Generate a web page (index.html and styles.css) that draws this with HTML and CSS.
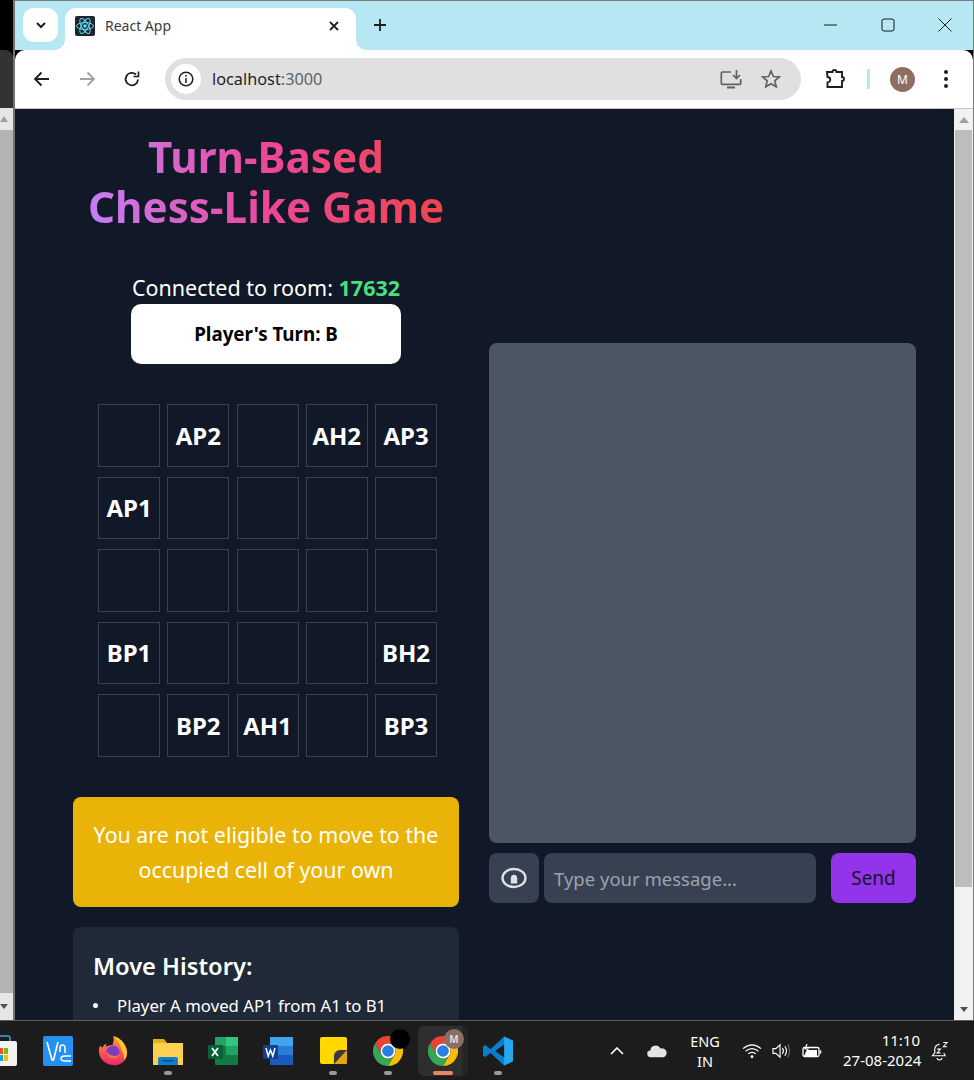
FILE: index.html
```html
<!DOCTYPE html>
<html>

<head>
    <title>React App</title>
    <meta charset="utf-8" />
    <link rel="stylesheet" href="styles.css">
</head>

<body>
    <svg class="defs-holder" width="0" height="0">
        <defs>
            <g id="chrome-logo">
                <path d="M2 7.500A15 15 0 0 1 28 7.500H15A7.500 7.500 0 0 0 8.500 18.750z" fill="#ea4335"/>
                <path d="M28 7.500A15 15 0 0 1 15 30L21.500 18.750A7.500 7.500 0 0 0 15 7.500z" fill="#fbbc04"/>
                <path d="M15 30A15 15 0 0 1 2 7.500L8.500 18.750A7.500 7.500 0 0 0 21.500 18.750z" fill="#34a853"/>
                <circle cx="15" cy="15" r="7.500" fill="#fff"/>
                <circle cx="15" cy="15" r="5.800" fill="#2a7de1"/>
            </g>
            <linearGradient id="fox-body" x1="0" y1="0" x2="0" y2="1">
                <stop offset="0" stop-color="#ff9a2e"/>
                <stop offset="1" stop-color="#f0266e"/>
            </linearGradient>
        </defs>
    </svg>

    <div id="screen">
        <div id="desktop-strip">
            <div class="strip-black"></div>
            <div class="strip-dark"></div>
            <div class="strip-scroll">
                <div class="strip-arrow"><svg width="8" height="6" viewBox="0 0 8 6"><path d="M4 0l4 6H0z" fill="#a0a0a0"/></svg></div>
                <div class="strip-thumb"></div>
                <div class="strip-arrow"><svg width="8" height="5" viewBox="0 0 8 5"><path d="M0 0h8L4 5z" fill="#505050"/></svg></div>
            </div>
        </div>

        <div id="window">
            <div id="tabbar">
                <div class="tab-search">
                    <svg width="16" height="16" viewBox="0 0 16 16"><path d="M4 6l4 4 4-4" fill="none" stroke="#1f1f1f" stroke-width="2"/></svg>
                </div>
                <div class="tab">
                    <div class="favicon">
                        <svg width="20" height="20" viewBox="0 0 20 20" fill="none" stroke="#61dafb" stroke-width="1">
                            <circle cx="10" cy="10" r="1.800" fill="#61dafb" stroke="none"/>
                            <ellipse cx="10" cy="10" rx="8.500" ry="3.400"/>
                            <ellipse cx="10" cy="10" rx="8.500" ry="3.400" transform="rotate(60 10 10)"/>
                            <ellipse cx="10" cy="10" rx="8.500" ry="3.400" transform="rotate(120 10 10)"/>
                        </svg>
                    </div>
                    <span class="tab-title">React App</span>
                    <svg class="tab-close" width="12" height="12" viewBox="0 0 12 12"><path d="M2 2l8 8M10 2l-8 8" stroke="#1f1f1f" stroke-width="1.800"/></svg>
                </div>
                <svg class="new-tab" width="14" height="14" viewBox="0 0 14 14"><path d="M7 1v12M1 7h12" stroke="#1f1f1f" stroke-width="1.800"/></svg>
                <div class="win-controls">
                    <svg width="14" height="14" viewBox="0 0 14 14"><path d="M0 7h13" stroke="#1a1a1a" stroke-width="1"/></svg>
                    <svg width="14" height="14" viewBox="0 0 14 14"><rect x="1" y="1" width="12" height="12" rx="2" fill="none" stroke="#1a1a1a" stroke-width="1"/></svg>
                    <svg width="14" height="14" viewBox="0 0 14 14"><path d="M0.500 0.500l13 13M13.500 0.500l-13 13" stroke="#1a1a1a" stroke-width="1"/></svg>
                </div>
            </div>

            <div id="toolbar">
                <div class="nav-icons">
                    <svg width="18" height="18" viewBox="0 0 18 18" fill="none" stroke="#1f1f1f" stroke-width="1.800"><path d="M16 9H2M8.500 2.500L2 9l6.500 6.500"/></svg>
                    <svg width="18" height="18" viewBox="0 0 18 18" fill="none" stroke="#a3a3a3" stroke-width="1.800"><path d="M2 9h14M9.500 2.500L16 9l-6.500 6.500"/></svg>
                    <svg width="18" height="18" viewBox="0 0 18 18" fill="none" stroke="#1f1f1f" stroke-width="1.800"><path d="M15 9.500A6.200 6.200 0 1 1 13 4.500"/><path d="M15.500 1.500v5h-5" stroke-width="1.600"/></svg>
                </div>
                <div class="omnibox">
                    <div class="site-info">
                        <svg width="16" height="16" viewBox="0 0 16 16" fill="none" stroke="#1f1f1f" stroke-width="1.500"><circle cx="8" cy="8" r="6.800"/><path d="M8 7v5M8 4v1.700"/></svg>
                    </div>
                    <span class="url">localhost<span class="url-port">:3000</span></span>
                    <svg class="omni-install" width="22" height="20" viewBox="0 0 22 20" fill="none" stroke="#5f6368" stroke-width="1.700"><path d="M11 3H2.500A1.200 1.200 0 0 0 1.300 4.200v10a1.200 1.200 0 0 0 1.200 1.200h17a1.200 1.200 0 0 0 1.200-1.200V10"/><path d="M7 18.500h8" stroke-width="2"/><path d="M16.500 1v8M13 6l3.500 3.500L20 6"/></svg>
                    <svg class="omni-star" width="20" height="20" viewBox="0 0 20 20" fill="none" stroke="#5f6368" stroke-width="1.700"><path d="M10 2l2.400 5.500 6 .5-4.600 3.900 1.400 5.800L10 14.700l-5.200 3 1.400-5.800L1.600 8l6-.5z"/></svg>
                </div>
                <svg class="ext-icon" width="22" height="22" viewBox="0 0 22 22" fill="none" stroke="#1f1f1f" stroke-width="1.900"><path d="M3 4h5.500a2 2 0 1 1 4 0H18v5a2 2 0 1 1 0 4v6H3.500v-4.500a2.500 2.500 0 0 0 0-5.500z"/></svg>
                <div class="toolbar-sep"></div>
                <div class="avatar">M</div>
                <div class="kebab"><i></i><i></i><i></i></div>
            </div>

            <div id="page-area">
                <div id="page">
                    <div class="col-left">
                        <h1 class="title">Turn-Based<br>Chess-Like Game</h1>
                        <div class="room-box">
                            <p class="room">Connected to room: <span class="room-id">17632</span></p>
                            <div class="turn">Player's Turn: B</div>
                        </div>
                        <div class="board">
                            <div class="cell"></div>
                            <div class="cell">AP2</div>
                            <div class="cell"></div>
                            <div class="cell">AH2</div>
                            <div class="cell">AP3</div>
                            <div class="cell">AP1</div>
                            <div class="cell"></div>
                            <div class="cell"></div>
                            <div class="cell"></div>
                            <div class="cell"></div>
                            <div class="cell"></div>
                            <div class="cell"></div>
                            <div class="cell"></div>
                            <div class="cell"></div>
                            <div class="cell"></div>
                            <div class="cell">BP1</div>
                            <div class="cell"></div>
                            <div class="cell"></div>
                            <div class="cell"></div>
                            <div class="cell">BH2</div>
                            <div class="cell"></div>
                            <div class="cell">BP2</div>
                            <div class="cell">AH1</div>
                            <div class="cell"></div>
                            <div class="cell">BP3</div>
                        </div>
                        <div class="alert">You are not eligible to move to the occupied cell of your own</div>
                        <div class="history">
                            <h2>Move History:</h2>
                            <ul>
                                <li>Player A moved AP1 from A1 to B1</li>
                            </ul>
                        </div>
                    </div>
                    <div class="col-right">
                        <div class="chat-log"></div>
                        <div class="chat-form">
                            <div class="emoji-btn">
                                <svg width="26" height="22" viewBox="0 0 26 22"><ellipse cx="13" cy="11" rx="11.500" ry="9" fill="none" stroke="#dfe1e5" stroke-width="2.400"/><path d="M9.800 16.500v-5a3.200 3.800 0 0 1 6.400 0v5z" fill="#dfe1e5"/></svg>
                            </div>
                            <div class="chat-input">Type your message...</div>
                            <div class="send-btn">Send</div>
                        </div>
                    </div>
                </div>
                <div class="scrollbar">
                    <div class="scroll-arrow"><svg width="10" height="6" viewBox="0 0 10 6"><path d="M5 0l5 6H0z" fill="#a0a0a0"/></svg></div>
                    <div class="scroll-track"><div class="scroll-thumb"></div></div>
                    <div class="scroll-arrow"><svg width="8" height="5" viewBox="0 0 8 5"><path d="M0 0h8L4 5z" fill="#505050"/></svg></div>
                </div>
            </div>
        </div>

        <div id="taskbar">
            <div class="tb-apps">
                <div class="store-slot">
                    <svg width="20" height="34" viewBox="0 0 20 34"><path d="M-8 7h23a2 2 0 0 1 2 2v21a2 2 0 0 1-2 2H-8z" fill="#f3f3f3"/><path d="M0 2h8a2 2 0 0 1 2 2v3" fill="none" stroke="#35a8e0" stroke-width="1.500"/><rect x="0" y="14" width="3" height="6" fill="#f25022"/><rect x="4" y="14" width="4" height="6" fill="#7fba00"/><rect x="0" y="21" width="3" height="6" fill="#00a4ef"/><rect x="4" y="21" width="4" height="6" fill="#ffb900"/></svg>
                </div>
                <div class="app">
                    <svg width="30" height="30" viewBox="0 0 30 30"><rect width="30" height="30" rx="2" fill="#2490f0"/><path d="M4 6l5 18h1.500L15 6" fill="none" stroke="#fff" stroke-width="1.600"/><path d="M17 16v-4q0-3 2.500-3t2.500 3v5M28 20h-6q-4 0-4 2.500t4 2.500h6" fill="none" stroke="#fff" stroke-width="1.500"/></svg>
                </div>
                <div class="app">
                    <svg width="30" height="30" viewBox="0 0 30 30"><path d="M15 29A14 14 0 0 1 2 9.500q1 1.500 2.500 2 1-3 4-4-1 2 0 3 3-2 6-1.500 2-5 .5-9 11 3 14 14 1 7-3.500 11.500T15 29z" fill="url(#fox-body)"/><path d="M16 0q9 3 12.500 13 1.500 7-2 11-1-11-10.500-24z" fill="#ffc52e"/><circle cx="15" cy="16" r="6.500" fill="#7a3fc0"/><path d="M9 16q0 7 7 6.500 5-.5 5.500-5-2 3-6 2.500T9 16z" fill="#ff7139"/></svg>
                </div>
                <div class="app has-dot">
                    <svg width="30" height="28" viewBox="0 0 30 28"><path d="M0 2h11l3 4h16v22H0z" fill="#e8ae14"/><rect y="6" width="30" height="22" fill="#ffd04f"/><path d="M5 28v-6a2 2 0 0 1 2-2h16a2 2 0 0 1 2 2v6z" fill="#0f7fd0"/><rect x="9" y="23" width="12" height="1.500" fill="#0b4f88"/></svg>
                </div>
                <div class="app">
                    <svg width="30" height="28" viewBox="0 0 30 28"><rect x="7" y="0" width="23" height="28" rx="1" fill="#107c41"/><rect x="18" y="0" width="12" height="9" fill="#33c481"/><rect x="7" y="0" width="11" height="9" fill="#21a366"/><rect x="18" y="9" width="12" height="9" fill="#21a366"/><rect x="0" y="8" width="15" height="14" rx="1" fill="#0b5f35"/><path d="M4 11l6 8M10 11l-6 8" stroke="#fff" stroke-width="1.800"/></svg>
                </div>
                <div class="app">
                    <svg width="30" height="28" viewBox="0 0 30 28"><rect x="7" y="0" width="23" height="28" rx="1" fill="#185abd"/><rect x="7" y="0" width="23" height="9" fill="#41a5ee"/><rect x="7" y="9" width="23" height="9" fill="#2b7cd3"/><rect x="0" y="8" width="15" height="14" rx="1" fill="#103f91"/><path d="M3 11l2.200 8 2.300-6 2.300 6 2.200-8" fill="none" stroke="#fff" stroke-width="1.500"/></svg>
                </div>
                <div class="app has-dot">
                    <svg width="27" height="27" viewBox="0 0 27 27"><rect width="27" height="27" rx="2" fill="#ffd800"/><path d="M27 13v12a2 2 0 0 1-2 2H13z" fill="#e2a410"/><path d="M14 27v-8a6 6 0 0 1 6-6h7z" fill="#3a3a3a"/></svg>
                </div>
                <div class="app has-dot">
                    <svg width="30" height="30" viewBox="0 0 30 30"><use href="#chrome-logo"/></svg>
                    <div class="badge-black"></div>
                </div>
                <div class="app active">
                    <svg width="30" height="30" viewBox="0 0 30 30"><use href="#chrome-logo"/></svg>
                    <div class="badge-m">M</div>
                </div>
                <div class="app has-dot">
                    <svg width="30" height="30" viewBox="0 0 32 31"><path d="M22.500 0L32 4.500v22L22.500 31 8 17.500 2.500 22 0 20.500v-10L2.500 9 8 13.500z" fill="#0a7fd0"/><path d="M22.500 0L32 4.500v22L22.500 31z" fill="#25a8f0"/><path d="M22.500 8.500L13 15.500l9.500 7z" fill="#1c1c1c"/></svg>
                </div>
            </div>
            <div class="tb-tray">
                <svg width="14" height="8" viewBox="0 0 14 8" fill="none" stroke="#fff" stroke-width="1.600"><path d="M1 7l6-6 6 6"/></svg>
                <svg class="tray-cloud" width="20" height="14" viewBox="0 0 21 14"><path d="M4 13.500a3.500 3.500 0 0 1-.5-7A5.500 5.500 0 0 1 14 4.500a4.500 4.500 0 0 1 3.500 9z" fill="#e4e4e4"/></svg>
                <div class="lang">ENG<br>IN</div>
                <svg class="tray-wifi" width="20" height="16" viewBox="0 0 21 16" fill="none" stroke="#fff" stroke-width="1.300"><path d="M1 5.500q9.500-8 19 0M3.800 8.300q6.700-5.500 13.400 0M6.500 11q4-3 8 0"/><circle cx="10.500" cy="14" r="1.500" fill="#fff" stroke="none"/></svg>
                <svg class="tray-vol" width="19" height="16" viewBox="0 0 20 16" fill="none" stroke="#fff" stroke-width="1.200"><path d="M1 5.500h3L8.500 1.500v13L4 10.500H1z"/><path d="M11 5q2 3 0 6M13.500 3q3.500 5 0 10"/><path d="M16.500 1q4 7 0 14" stroke="#666"/></svg>
                <svg class="tray-batt" width="20" height="14" viewBox="0 0 20 14" fill="none" stroke="#fff" stroke-width="1.300"><rect x="1" y="3.500" width="16" height="9" rx="1.500"/><path d="M18.500 6.500v3" stroke-width="1.500"/><path d="M2 12l3-6h10v6z" fill="#fff" stroke="none"/><path d="M5 0L3 5h3L4 9" stroke-width="1.200"/></svg>
                <div class="clock">
                    <div>11:10</div>
                    <div>27-08-2024</div>
                </div>
                <svg class="tray-bell" width="17" height="20" viewBox="0 0 18 20" fill="none" stroke="#fff" stroke-width="1.200"><path d="M9 3a5 5 0 0 0-5 5v4l-2.500 3h13.500l-1.500-3"/><path d="M6.500 17.500a2.500 2 0 0 0 5 0"/><path d="M6.500 8h3.500l-3.500 4h3.500M13 1h4l-4 4.500h4" stroke-width="1.100"/></svg>
            </div>
        </div>
    </div>
</body>

</html>
```

FILE: styles.css
```css
* {
    margin: 0;
    padding: 0;
    box-sizing: border-box;
}

html,
body {
    width: 974px;
    height: 1080px;
    overflow: hidden;
    font-family: "Noto Sans", "Open Sans", sans-serif;
}

.defs-holder {
    position: absolute;
}

#screen {
    display: grid;
    grid-template-columns: 15px 959px;
    grid-template-rows: 1020px 60px;
    width: 974px;
    height: 1080px;
    background: #000;
}

/* sliver of the window behind */
#desktop-strip {
    display: flex;
    flex-direction: column;
    border-right: 2px solid #747474;
}

.strip-black {
    height: 50px;
    background: #000;
}

.strip-dark {
    height: 58px;
    background: #333;
    border-top-right-radius: 8px;
}

.strip-scroll {
    flex: 1;
    display: flex;
    flex-direction: column;
    background: #e6e6e6;
}

.strip-arrow {
    display: flex;
    align-items: center;
    height: 22px;
}

.strip-thumb {
    height: 863px;
    background: #b4b4b4;
}

.strip-thumb + .strip-arrow {
    height: 27px;
}

#window {
    display: flex;
    flex-direction: column;
    min-width: 0;
    border-top: 1px solid #7b7b7b;
    border-right: 1px solid #7b7b7b;
}

#tabbar {
    display: flex;
    align-items: flex-start;
    height: 49px;
    flex: none;
    background: #b5e8f3;
    padding: 7px 0 0 8px;
}

.tab-search {
    display: flex;
    align-items: center;
    justify-content: center;
    width: 35px;
    height: 34px;
    background: #fff;
    border-radius: 11px;
}

.tab {
    position: relative;
    display: flex;
    align-items: center;
    width: 291px;
    height: 42px;
    margin-left: 7px;
    padding: 0 16px 7px 10px;
    background: #fff;
    border-radius: 11px 11px 0 0;
}

.tab::before,
.tab::after {
    content: "";
    position: absolute;
    bottom: 0;
    width: 11px;
    height: 11px;
}

.tab::before {
    left: -11px;
    background: radial-gradient(circle at 0 0, transparent 11px, #fff 11px);
}

.tab::after {
    right: -11px;
    background: radial-gradient(circle at 100% 0, transparent 11px, #fff 11px);
}

.favicon {
    display: flex;
    align-items: center;
    justify-content: center;
    width: 20px;
    height: 20px;
    background: #20232a;
    border-radius: 2px;
}

.tab-title {
    margin-left: 10px;
    font-size: 14px;
    color: #3c3c3c;
    flex: 1;
}

.new-tab {
    margin: 10px 0 0 17px;
}

.win-controls {
    display: flex;
    gap: 43px;
    margin: 10px 0 0 auto;
    padding-right: 21px;
}

#toolbar {
    display: flex;
    align-items: center;
    height: 59px;
    flex: none;
    background: #fff;
    border-radius: 10px 10px 0 0;
    border-bottom: 1px solid #c6c6c6;
}

.nav-icons {
    display: flex;
    gap: 27px;
    padding-left: 18px;
    width: 150px;
}

.omnibox {
    display: flex;
    align-items: center;
    width: 636px;
    height: 42px;
    background: #e0e0e0;
    border-radius: 21px;
    padding-left: 6px;
}

.site-info {
    display: flex;
    align-items: center;
    justify-content: center;
    width: 30px;
    height: 30px;
    background: #fff;
    border-radius: 50%;
}

.url {
    margin-left: 11px;
    font-size: 16.300px;
    color: #1f1f1f;
    flex: 1;
}

.url-port {
    color: #5f6368;
}

.omni-install {
    margin-right: 19px;
}

.omni-star {
    margin-right: 20px;
}

.ext-icon {
    margin-left: 23px;
}

.toolbar-sep {
    width: 3px;
    height: 20px;
    background: #b5e8f3;
    margin-left: 21px;
}

.avatar {
    display: flex;
    align-items: center;
    justify-content: center;
    width: 25px;
    height: 25px;
    margin-left: 20px;
    border-radius: 50%;
    background: #8d6e63;
    color: #fff;
    font-size: 12px;
}

.kebab {
    display: flex;
    flex-direction: column;
    gap: 3px;
    margin-left: 29px;
}

.kebab i {
    display: block;
    width: 4px;
    height: 4px;
    border-radius: 50%;
    background: #1f1f1f;
}

#page-area {
    display: flex;
    flex: 1;
    min-height: 0;
}

#page {
    display: flex;
    align-items: flex-start;
    width: 939px;
    flex: none;
    height: 911px;
    overflow: hidden;
    background: #111827;
    color: #fff;
    padding: 20px 38px 0 58px;
    gap: 30px;
}

.col-left {
    width: 386px;
    flex: none;
}

.title {
    text-align: center;
    white-space: nowrap;
    font-size: 42.200px;
    line-height: 50px;
    font-weight: 700;
    background: linear-gradient(to right, #c084fc, #ec4899, #ef4444);
    background-clip: text;
    -webkit-background-clip: text;
    color: transparent;
    padding: 3px 15px 0;
}

.room-box {
    width: 270px;
    margin: 39px auto 0;
}

.room {
    text-align: center;
    font-size: 21.500px;
    line-height: 33px;
    white-space: nowrap;
}

.room-id {
    color: #4ade80;
    font-weight: 700;
}

.turn {
    display: flex;
    align-items: center;
    justify-content: center;
    height: 60px;
    background: #fff;
    color: #000;
    border-radius: 10px;
    font-size: 18.800px;
    font-weight: 700;
}

.board {
    display: grid;
    grid-template-columns: repeat(5, 62px);
    grid-auto-rows: 62.500px;
    gap: 10px 7.250px;
    justify-content: start;
    padding-left: 25px;
    margin-top: 40px;
}

.cell {
    display: flex;
    align-items: center;
    justify-content: center;
    border: 1px solid #374151;
    font-size: 24px;
    font-weight: 700;
}

.alert {
    margin-top: 40px;
    height: 110px;
    padding: 20px;
    background: #eab308;
    border-radius: 8px;
    text-align: center;
    font-size: 21.400px;
    line-height: 35px;
}

.history {
    margin-top: 20px;
    padding: 20px;
    background: #1f2937;
    border-radius: 8px;
    height: 200px;
}

.history h2 {
    font-size: 23.700px;
    line-height: 38px;
    font-weight: 600;
    margin-bottom: 9px;
}

.history ul {
    list-style: none;
    font-size: 16.750px;
    line-height: 24px;
}

.history li {
    display: flex;
    align-items: center;
}

.history li::before {
    content: "";
    width: 5px;
    height: 5px;
    margin-right: 19px;
    border-radius: 50%;
    background: #fff;
}

.col-right {
    flex: 1;
    padding-top: 214px;
    min-width: 0;
}

.chat-log {
    height: 500px;
    background: #4b5563;
    border-radius: 8px;
}

.chat-form {
    display: flex;
    gap: 5px;
    margin-top: 10px;
    height: 50px;
}

.emoji-btn {
    display: flex;
    align-items: center;
    justify-content: center;
    width: 50px;
    background: #374151;
    border-radius: 8px;
}

.chat-input {
    flex: 1;
    display: flex;
    align-items: center;
    padding-left: 10px;
    background: #374151;
    border-radius: 8px;
    font-size: 18.500px;
    color: #9ca3af;
}

.send-btn {
    display: flex;
    align-items: center;
    justify-content: center;
    width: 85px;
    margin-left: 10px;
    background: #9333ea;
    border-radius: 8px;
    font-size: 19px;
    color: #111827;
}

.scrollbar {
    display: flex;
    flex-direction: column;
    flex: 1;
    background: #f1f1f1;
}

.scroll-arrow {
    display: flex;
    align-items: center;
    justify-content: center;
    height: 21px;
}

.scroll-track {
    flex: 1;
}

.scroll-thumb {
    height: 757px;
    margin: 0 1px;
    background: #bdbdbd;
}

#taskbar {
    grid-column: 1 / 3;
    display: flex;
    align-items: center;
    justify-content: space-between;
    background: #1c1c1c;
    border-top: 1px solid #5a5a5a;
}

.tb-apps {
    display: flex;
    align-items: center;
}

.store-slot {
    display: flex;
    width: 30.500px;
    flex: none;
}

.app {
    position: relative;
    display: flex;
    align-items: center;
    justify-content: center;
    width: 55px;
    height: 50px;
}

.has-dot::after {
    content: "";
    position: absolute;
    left: 50%;
    bottom: 1px;
    width: 8px;
    height: 4px;
    margin-left: -4px;
    border-radius: 2px;
    background: #9a9a9a;
}

.active {
    width: 50px;
    margin: 0 2.500px;
    background: linear-gradient(to right, #2e2e2e 44px, #262626 44px);
    border-radius: 6px;
}

.active::after {
    content: "";
    position: absolute;
    left: 50%;
    bottom: 1px;
    width: 20px;
    height: 4px;
    margin-left: -10px;
    border-radius: 2px;
    background: #f2836b;
}

.badge-black {
    position: absolute;
    top: 3px;
    right: 6px;
    width: 20px;
    height: 20px;
    border-radius: 50%;
    background: #000;
}

.badge-m {
    position: absolute;
    top: 3px;
    right: 4px;
    width: 20px;
    height: 20px;
    border-radius: 50%;
    background: #8d6e63;
    color: #ddd;
    font-size: 10px;
    font-weight: 700;
    text-align: center;
    line-height: 20px;
}

.tb-tray {
    display: flex;
    align-items: center;
    padding-right: 26px;
    color: #fff;
}

.tray-cloud {
    margin-left: 23px;
}

.lang {
    width: 40px;
    margin-left: 18px;
    text-align: center;
    font-size: 14.500px;
    line-height: 20px;
}

.tray-wifi {
    margin-left: 17px;
}

.tray-vol {
    margin-left: 10px;
}

.tray-batt {
    margin-left: 11px;
}

.clock {
    width: 77px;
    margin-left: 21px;
    padding-bottom: 2px;
    text-align: right;
    font-size: 15px;
    line-height: 20px;
    white-space: nowrap;
}

.tray-bell {
    margin-left: 11px;
}
```
